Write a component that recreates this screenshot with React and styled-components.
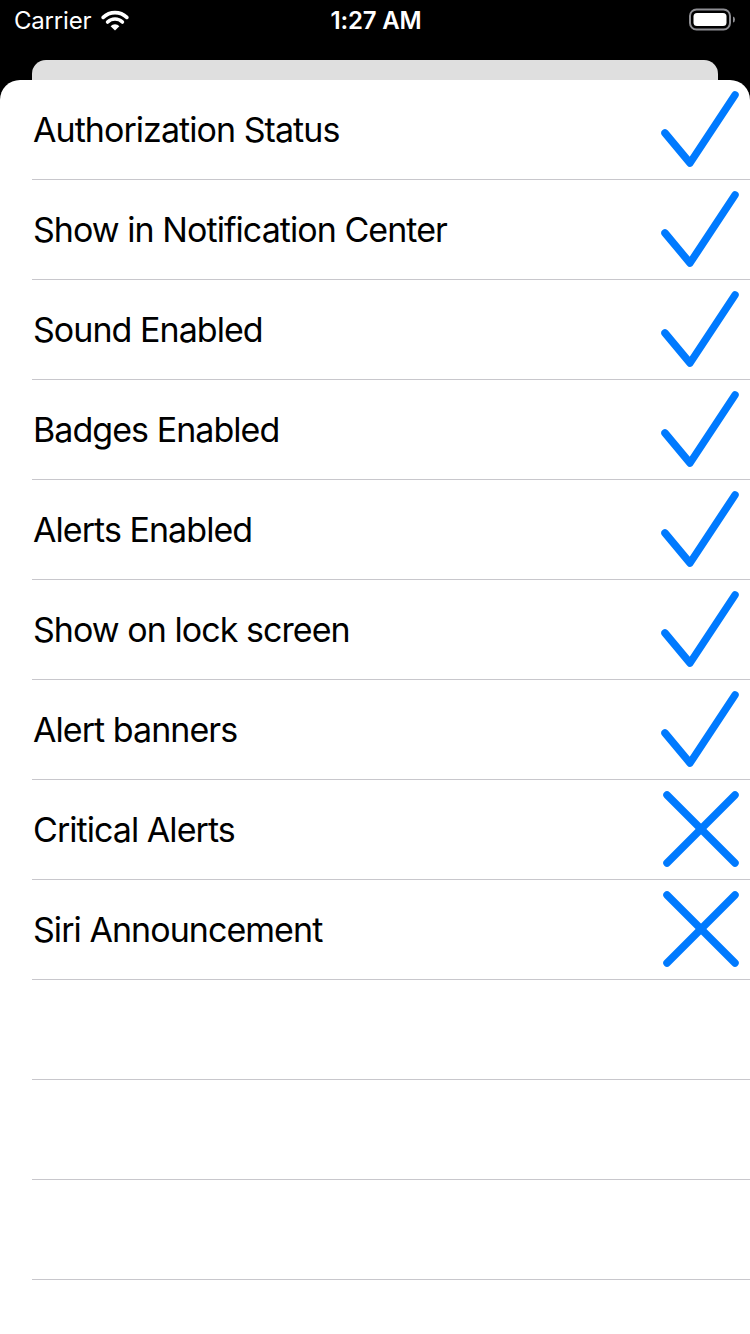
import React from "react";
import styled, { createGlobalStyle } from "styled-components";

const Global = createGlobalStyle`
  html, body { margin: 0; padding: 0; background: #000; }
  body { font-family: Inter, "Noto Sans", "Liberation Sans", sans-serif; -webkit-font-smoothing: antialiased; }
  * { box-sizing: border-box; }
`;

const Screen = styled.div`
  width: 750px;
  height: 1334px;
  background: #000;
  display: flex;
  flex-direction: column;
  overflow: hidden;
`;

const StatusBar = styled.div`
  height: 40px;
  flex: none;
  display: grid;
  grid-template-columns: 1fr auto 1fr;
  align-items: center;
  padding: 0 12px 0 14px;
  color: #fff;
  font-size: 24px;
`;

const Left = styled.div`
  display: flex;
  align-items: center;
  gap: 10px;
  letter-spacing: -0.2px;
`;

const Time = styled.div`
  font-weight: 600;
  letter-spacing: -0.2px;
`;

const Right = styled.div`
  display: flex;
  justify-content: flex-end;
  align-items: center;
`;

const BackCard = styled.div`
  flex: none;
  height: 20px;
  margin: 20px 32px 0 32px;
  background: #dfdfdf;
  border-radius: 14px 14px 0 0;
`;

const Sheet = styled.div`
  flex: 1;
  background: #fff;
  border-radius: 20px 20px 0 0;
  display: flex;
  flex-direction: column;
`;

const Row = styled.div`
  flex: none;
  height: 100px;
  margin-left: 32px;
  border-bottom: 1px solid #c8c7cc;
  display: flex;
  align-items: flex-start;
  justify-content: space-between;
`;

const Label = styled.span`
  align-self: center;
  margin-left: 1px;
  font-size: 34px;
  letter-spacing: -0.95px;
  color: #000;
  line-height: 1;
`;

const Accessory = styled.svg`
  flex: none;
  width: 90px;
  height: 99px;
`;

const BLUE = "#007aff";

function Check() {
  return (
    <Accessory viewBox="0 0 90 99">
      <polyline
        points="5,53 30,83 75,15"
        fill="none"
        stroke={BLUE}
        strokeWidth="7.5"
        strokeLinecap="round"
        strokeLinejoin="round"
      />
    </Accessory>
  );
}

function Cross() {
  return (
    <Accessory viewBox="0 0 90 99">
      <g stroke={BLUE} strokeWidth="7.5" strokeLinecap="round">
        <line x1="7" y1="15" x2="75" y2="83" />
        <line x1="75" y1="15" x2="7" y2="83" />
      </g>
    </Accessory>
  );
}

function Wifi() {
  return (
    <svg width="28" height="22" viewBox="0 0 28 22">
      <g fill="none" stroke="#fff" strokeWidth="3.6" strokeLinecap="round">
        <path d="M2.2 8.4 A17 17 0 0 1 25.8 8.4" />
        <path d="M6.6 13 A10.6 10.6 0 0 1 21.4 13" />
      </g>
      <path d="M14 21.5 L9.6 17.2 A6.2 6.2 0 0 1 18.4 17.2 Z" fill="#fff" />
    </svg>
  );
}

function Battery() {
  return (
    <svg width="50" height="24" viewBox="0 0 50 24">
      <rect x="2" y="1.5" width="40" height="20" rx="6.5" fill="none" stroke="#8e8e93" strokeWidth="2" />
      <rect x="5.5" y="5" width="33" height="13" rx="3.5" fill="#fff" />
      <path d="M45 8.5 Q47 9 47 11.5 Q47 14 45 14.5 Z" fill="#8e8e93" />
    </svg>
  );
}

const rows = [
  { label: "Authorization Status", ok: true },
  { label: "Show in Notification Center", ok: true },
  { label: "Sound Enabled", ok: true },
  { label: "Badges Enabled", ok: true },
  { label: "Alerts Enabled", ok: true },
  { label: "Show on lock screen", ok: true },
  { label: "Alert banners", ok: true },
  { label: "Critical Alerts", ok: false },
  { label: "Siri Announcement", ok: false },
  { label: "", ok: null },
  { label: "", ok: null },
  { label: "", ok: null },
];

export default function App() {
  return (
    <>
      <Global />
      <Screen>
        <StatusBar>
          <Left>
            <span>Carrier</span>
            <Wifi />
          </Left>
          <Time>1:27 AM</Time>
          <Right>
            <Battery />
          </Right>
        </StatusBar>
        <BackCard />
        <Sheet>
          {rows.map((r, i) => (
            <Row key={i}>
              <Label>{r.label}</Label>
              {r.ok === true && <Check />}
              {r.ok === false && <Cross />}
            </Row>
          ))}
        </Sheet>
      </Screen>
    </>
  );
}
